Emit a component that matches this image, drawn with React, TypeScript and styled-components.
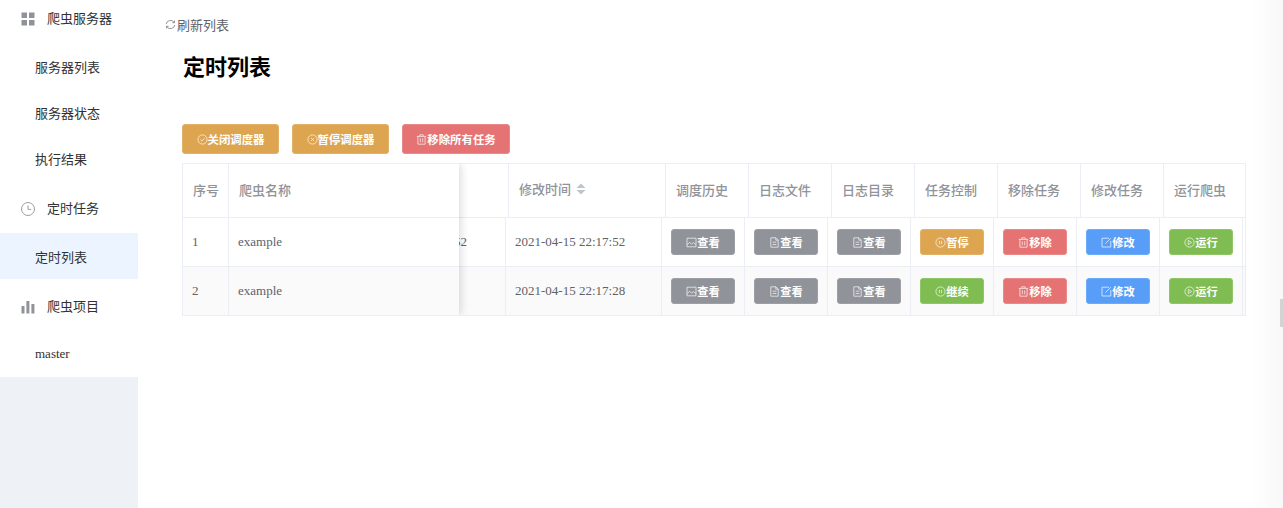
import { createGlobalStyle, styled } from "styled-components";

const GlobalStyle = createGlobalStyle`
  html, body {
    margin: 0;
    height: 100%;
    overflow: hidden;
    background: #fff;
    font-family: "Liberation Serif", "Noto Sans CJK SC", serif;
  }
`;

const Page = styled.div`
  position: relative;
  display: flex;
  width: 1283px;
  height: 508px;
  overflow: hidden;
`;

// Sidebar
const Sidebar = styled.aside`
  width: 138px;
  flex: none;
  margin-top: -9px;
  background: #eef1f6;
`;

const Menu = styled.div`
  background: #fff;
`;

const GroupTitle = styled.div`
  display: flex;
  align-items: center;
  gap: 12px;
  height: 52px;
  padding-left: 21px;
  font-size: 13px;
  color: #303133;
`;

const GroupIcon = styled.svg`
  width: 14px;
  height: 14px;
  flex: none;
  margin-top: 4px;
  color: #909399;
`;

const MenuItem = styled.div<{ $active?: boolean }>`
  display: flex;
  align-items: center;
  height: 46px;
  padding-left: 35px;
  font-size: 13px;
  color: #303133;
  background: ${(p) => (p.$active ? "#ecf5ff" : "#fff")};
`;

// Main
const Main = styled.main`
  flex: 1;
  min-width: 0;
  padding: 15px 0 0 27px;
`;

const RefreshLink = styled.div`
  display: flex;
  align-items: center;
  gap: 1px;
  height: 18px;
  font-size: 13px;
  color: #606266;
`;

const Title = styled.h1`
  margin: 20px 0 0 18px;
  font-size: 22px;
  line-height: 30px;
  font-weight: 700;
  color: #000;
`;

const Toolbar = styled.div`
  display: flex;
  gap: 13px;
  margin: 41px 0 0 17px;
`;

const colors = {
  warning: ["#dda550", "#e2b26a"],
  danger: ["#e57373", "#ea8989"],
  primary: ["#589ef8", "#6cabf9"],
  success: ["#7fbd52", "#8fc668"],
  gray: ["#909399", "#9c9fa4"],
};

type Tone = keyof typeof colors;

const ToolbarButton = styled.button<{ $tone: Tone; $width: number }>`
  display: flex;
  align-items: center;
  justify-content: center;
  width: ${(p) => p.$width}px;
  height: 30px;
  padding: 0;
  border: 1px solid ${(p) => colors[p.$tone][1]};
  border-radius: 3px;
  background: ${(p) => colors[p.$tone][0]};
  color: #fff;
  font: 700 11.4px "Liberation Serif", "Noto Sans CJK SC", serif;
`;

const CellButton = styled.button<{ $tone: Tone }>`
  display: flex;
  align-items: center;
  justify-content: center;
  width: 64px;
  height: 26px;
  padding: 0;
  border: 1px solid ${(p) => colors[p.$tone][1]};
  border-radius: 3px;
  background: ${(p) => colors[p.$tone][0]};
  color: #fff;
  font: 700 11.2px "Liberation Serif", "Noto Sans CJK SC", serif;
`;

const ButtonIcon = styled.svg`
  width: 11px;
  height: 11px;
  flex: none;
  fill: none;
  stroke: currentColor;
  stroke-width: 0.8;
  opacity: 0.85;
`;

// Table
const TableBox = styled.div`
  position: relative;
  width: 1062px;
  margin: 9px 0 0 17px;
  border: 1px solid #ebeef5;
  overflow: hidden;
`;

const HeadRow = styled.div`
  display: grid;
  grid-template-columns: 325px 157px repeat(7, 83px);
  height: 53px;
  border-bottom: 1px solid #ebeef5;
`;

const BodyRow = styled.div<{ $striped?: boolean }>`
  display: grid;
  grid-template-columns: 322px 156px repeat(7, 83px) 1fr;
  height: 48px;
  background: ${(p) => (p.$striped ? "#fafafa" : "#fff")};

  & + & {
    border-top: 1px solid #ebeef5;
  }
`;

const HeadCell = styled.div<{ $raised?: boolean }>`
  display: flex;
  align-items: center;
  gap: 5px;
  padding: 0 0 ${(p) => (p.$raised ? "4px" : "2px")} 10px;
  border-left: 1px solid #ebeef5;
  font-size: 13px;
  font-weight: 500;
  color: #909399;
  white-space: nowrap;
`;

const BodyCell = styled.div`
  display: flex;
  align-items: center;
  padding-left: 9px;
  border-left: 1px solid #ebeef5;
  font-size: 13px;
  color: #606266;
  white-space: nowrap;
`;

const ClippedCell = styled.div`
  display: flex;
  align-items: center;
  justify-content: flex-end;
  padding-right: 38px;
  font-size: 13px;
  color: #606266;
`;

const SortCaret = styled.svg`
  width: 10px;
  height: 12px;
  color: #c0c4cc;
`;

const FixedPane = styled.div`
  position: absolute;
  top: 0;
  left: 0;
  width: 276px;
  background: #fff;
  box-shadow: 2px 0 8px rgba(0, 0, 0, 0.14);
`;

const FixedHead = styled.div`
  display: grid;
  grid-template-columns: 45px 1fr;
  height: 53px;
  border-bottom: 1px solid #ebeef5;
`;

const FixedRow = styled.div<{ $striped?: boolean }>`
  display: grid;
  grid-template-columns: 45px 1fr;
  height: 48px;
  background: ${(p) => (p.$striped ? "#fafafa" : "#fff")};

  & + & {
    border-top: 1px solid #ebeef5;
  }
`;

const FixedCell = styled.div`
  display: flex;
  align-items: center;
  padding-left: 9px;
  font-size: 13px;
  color: #606266;

  & + & {
    border-left: 1px solid #ebeef5;
  }
`;

const FixedHeadCell = styled.div`
  display: flex;
  align-items: center;
  padding: 0 0 2px 10px;
  font-size: 13px;
  font-weight: 500;
  color: #909399;

  & + & {
    border-left: 1px solid #ebeef5;
  }
`;

const PageEdge = styled.div`
  position: absolute;
  top: 0;
  right: 0;
  bottom: 0;
  width: 32px;
  background: linear-gradient(to right, #fff, #f8f8f8);
`;

const ScrollThumb = styled.div`
  position: absolute;
  top: 299px;
  right: 0;
  width: 3px;
  height: 28px;
  background: #d3d3d3;
`;

const headers = ["调度历史", "日志文件", "日志目录", "任务控制", "移除任务", "修改任务", "运行爬虫"];

const rows = [
  { id: 1, name: "example", created: "2021-04-15 22:17:52", modified: "2021-04-15 22:17:52", paused: false },
  { id: 2, name: "example", created: "", modified: "2021-04-15 22:17:28", paused: true },
];

function GridIcon() {
  return (
    <GroupIcon viewBox="0 0 14 14" fill="currentColor">
      <rect x="0.5" y="0.5" width="5.5" height="5.5" />
      <rect x="8" y="0.5" width="5.5" height="5.5" />
      <rect x="0.5" y="8" width="5.5" height="5.5" />
      <rect x="8" y="8" width="5.5" height="5.5" />
    </GroupIcon>
  );
}

function ClockIcon() {
  return (
    <GroupIcon viewBox="0 0 14 14" fill="none" stroke="currentColor" strokeWidth="0.9">
      <circle cx="7" cy="7" r="6.5" />
      <path d="M7 3.4V7.4H10.2" />
    </GroupIcon>
  );
}

function BarsIcon() {
  return (
    <GroupIcon viewBox="0 0 14 14" fill="currentColor">
      <rect x="0.5" y="6" width="3" height="7.5" />
      <rect x="5.4" y="1" width="3" height="12.5" />
      <rect x="10.4" y="4" width="3" height="9.5" />
    </GroupIcon>
  );
}

const iconPaths = {
  refresh: "M1.2 5A4.4 4.4 0 0 1 9.2 3.4M9.8 6A4.4 4.4 0 0 1 1.8 7.6M9.5 1.6V3.7H7.4M1.5 9.4V7.3H3.6",
  check: "M5.5 0.9A4.6 4.6 0 1 0 5.5 10.1A4.6 4.6 0 1 0 5.5 0.9ZM3.3 5.6L4.9 7.1L7.8 4",
  close: "M5.5 0.9A4.6 4.6 0 1 0 5.5 10.1A4.6 4.6 0 1 0 5.5 0.9ZM4 4L7 7M7 4L4 7",
  trash: "M0.8 2.4H10.2M3.8 2.4V0.8H7.2V2.4M1.9 2.4V10.2H9.1V2.4M4.3 4.3V8.3M6.7 4.3V8.3",
  image: "M1 1.2H10V9.8H1ZM1 7.8L3.6 5.2L5.6 7.2L7.4 5.6L10 7.8",
  doc: "M1.8 0.8H7L9.2 3V10.2H1.8ZM6.8 0.8V3.2H9.2M3.6 5.2H7.4M3.6 7.5H7.4",
  pause: "M5.5 0.9A4.6 4.6 0 1 0 5.5 10.1A4.6 4.6 0 1 0 5.5 0.9ZM4.4 3.8V7.2M6.6 3.8V7.2",
  play: "M5.5 0.9A4.6 4.6 0 1 0 5.5 10.1A4.6 4.6 0 1 0 5.5 0.9ZM4.3 3.4L7.6 5.5L4.3 7.6Z",
  edit: "M8 1.2H1V10H9.8V4M4.4 6.6L9.8 1.2",
};

function Glyph({ name }: { name: keyof typeof iconPaths }) {
  return (
    <ButtonIcon viewBox="0 0 11 11">
      <path d={iconPaths[name]} />
    </ButtonIcon>
  );
}

export default function App() {
  return (
    <Page>
      <GlobalStyle />
      <Sidebar>
        <Menu>
          <GroupTitle>
            <GridIcon />
            爬虫服务器
          </GroupTitle>
          <MenuItem>服务器列表</MenuItem>
          <MenuItem>服务器状态</MenuItem>
          <MenuItem>执行结果</MenuItem>
          <GroupTitle>
            <ClockIcon />
            定时任务
          </GroupTitle>
          <MenuItem $active>定时列表</MenuItem>
          <GroupTitle>
            <BarsIcon />
            爬虫项目
          </GroupTitle>
          <MenuItem>master</MenuItem>
        </Menu>
      </Sidebar>

      <Main>
        <RefreshLink>
          <Glyph name="refresh" />
          刷新列表
        </RefreshLink>
        <Title>定时列表</Title>

        <Toolbar>
          <ToolbarButton $tone="warning" $width={97}>
            <Glyph name="check" />
            关闭调度器
          </ToolbarButton>
          <ToolbarButton $tone="warning" $width={97}>
            <Glyph name="close" />
            暂停调度器
          </ToolbarButton>
          <ToolbarButton $tone="danger" $width={108}>
            <Glyph name="trash" />
            移除所有任务
          </ToolbarButton>
        </Toolbar>

        <TableBox>
          <HeadRow>
            <div />
            <HeadCell $raised>
              修改时间
              <SortCaret viewBox="0 0 10 12" fill="currentColor">
                <path d="M5 0.5L9.5 5H0.5Z" />
                <path d="M5 11.5L0.5 7H9.5Z" />
              </SortCaret>
            </HeadCell>
            {headers.map((h) => (
              <HeadCell key={h}>{h}</HeadCell>
            ))}
          </HeadRow>

          {rows.map((row) => (
            <BodyRow key={row.id} $striped={row.id % 2 === 0}>
              <ClippedCell>{row.created.slice(-2)}</ClippedCell>
              <BodyCell>{row.modified}</BodyCell>
              <BodyCell>
                <CellButton $tone="gray">
                  <Glyph name="image" />
                  查看
                </CellButton>
              </BodyCell>
              <BodyCell>
                <CellButton $tone="gray">
                  <Glyph name="doc" />
                  查看
                </CellButton>
              </BodyCell>
              <BodyCell>
                <CellButton $tone="gray">
                  <Glyph name="doc" />
                  查看
                </CellButton>
              </BodyCell>
              <BodyCell>
                <CellButton $tone={row.paused ? "success" : "warning"}>
                  <Glyph name="pause" />
                  {row.paused ? "继续" : "暂停"}
                </CellButton>
              </BodyCell>
              <BodyCell>
                <CellButton $tone="danger">
                  <Glyph name="trash" />
                  移除
                </CellButton>
              </BodyCell>
              <BodyCell>
                <CellButton $tone="primary">
                  <Glyph name="edit" />
                  修改
                </CellButton>
              </BodyCell>
              <BodyCell>
                <CellButton $tone="success">
                  <Glyph name="play" />
                  运行
                </CellButton>
              </BodyCell>
              <BodyCell />
            </BodyRow>
          ))}

          <FixedPane>
            <FixedHead>
              <FixedHeadCell>序号</FixedHeadCell>
              <FixedHeadCell>爬虫名称</FixedHeadCell>
            </FixedHead>
            {rows.map((row) => (
              <FixedRow key={row.id} $striped={row.id % 2 === 0}>
                <FixedCell>{row.id}</FixedCell>
                <FixedCell>{row.name}</FixedCell>
              </FixedRow>
            ))}
          </FixedPane>
        </TableBox>
      </Main>

      <PageEdge />
      <ScrollThumb />
    </Page>
  );
}
